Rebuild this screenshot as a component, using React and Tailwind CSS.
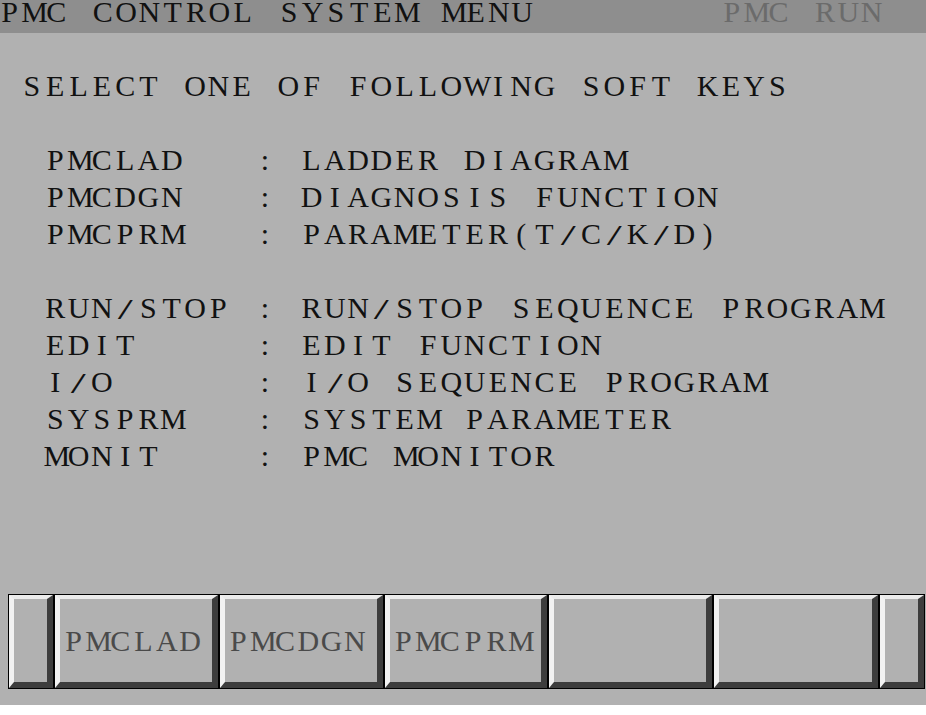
import React from 'react';

// fixed character grid, like the CRT text screen
const Cells = ({ text, className = '' }) => (
  <span className={`inline-flex whitespace-pre ${className}`}>
    {[...text].map((ch, i) => (
      <span key={i} className="inline-block w-[23.3px] shrink-0 text-center">
        {ch === '/' ? <span className="inline-block scale-x-[1.8] translate-y-[1px]">/</span> : ch}
      </span>
    ))}
  </span>
);

const menuGroups = [
  [
    ['PMCLAD', 'LADDER DIAGRAM'],
    ['PMCDGN', 'DIAGNOSIS FUNCTION'],
    ['PMCPRM', 'PARAMETER(T/C/K/D)'],
  ],
  [
    ['RUN/STOP', 'RUN/STOP SEQUENCE PROGRAM'],
    ['EDIT', 'EDIT FUNCTION'],
    ['I/O', 'I/O SEQUENCE PROGRAM'],
    ['SYSPRM', 'SYSTEM PARAMETER'],
    ['MONIT', 'PMC MONITOR'],
  ],
];

const softKeys = [
  { label: '', w: 'w-[44px]' },
  { label: 'PMCLAD', w: 'w-[163px]' },
  { label: 'PMCDGN', w: 'w-[163px]' },
  { label: 'PMCPRM', w: 'w-[163px]' },
  { label: '', w: 'w-[163px]' },
  { label: '', w: 'w-[164px]' },
  { label: '', w: 'w-[44px]' },
];

const row = (key, desc) => '  ' + key.padEnd(9, ' ') + ': ' + desc;

export default function App() {
  return (
    <div className="w-[926px] h-[715px] overflow-hidden bg-white text-[30px] text-[#111]" style={{ fontFamily: '"Liberation Serif", "Times New Roman", serif' }}>
      <div className="h-[705px] bg-[#b1b1b1] flex flex-col">
        {/* title bar */}
        <div className="h-[33px] bg-[#8e8e8e] leading-[24px] flex pl-[1px] -ml-[3px]">
          <Cells text={'PMC CONTROL SYSTEM MENU        '} />
          <Cells text="PMC RUN" className="text-[#6b6b6b]" />
        </div>

        {/* menu text */}
        <div className="pt-[34px] leading-[37px] -ml-[3px]">
          <div className="flex">
            <Cells text=" SELECT ONE OF FOLLOWING SOFT KEYS" />
          </div>
          {menuGroups.map((group, gi) => (
            <div key={gi} className="mt-[37px]">
              {group.map(([k, d]) => (
                <div key={k} className="flex">
                  <Cells text={row(k, d)} />
                </div>
              ))}
            </div>
          ))}
        </div>

        {/* soft keys */}
        <div className="mt-auto mb-[16px] ml-[8px] flex h-[95px] w-[917px] gap-[2px] border border-black bg-black">
          {softKeys.map((key, i) => (
            <div
              key={i}
              className={`${key.w} h-full flex items-center bg-[#b1b1b1] border-t-[4px] border-l-[5px] border-r-[6px] border-b-[6px] border-t-[#ebebeb] border-l-[#f2f2f2] border-r-[#3d3d3d] border-b-[#3d3d3d] pl-[2px] text-[#4a4a4a] leading-none`}
            >
              {key.label && <Cells text={key.label} />}
            </div>
          ))}
        </div>
      </div>
    </div>
  );
}
